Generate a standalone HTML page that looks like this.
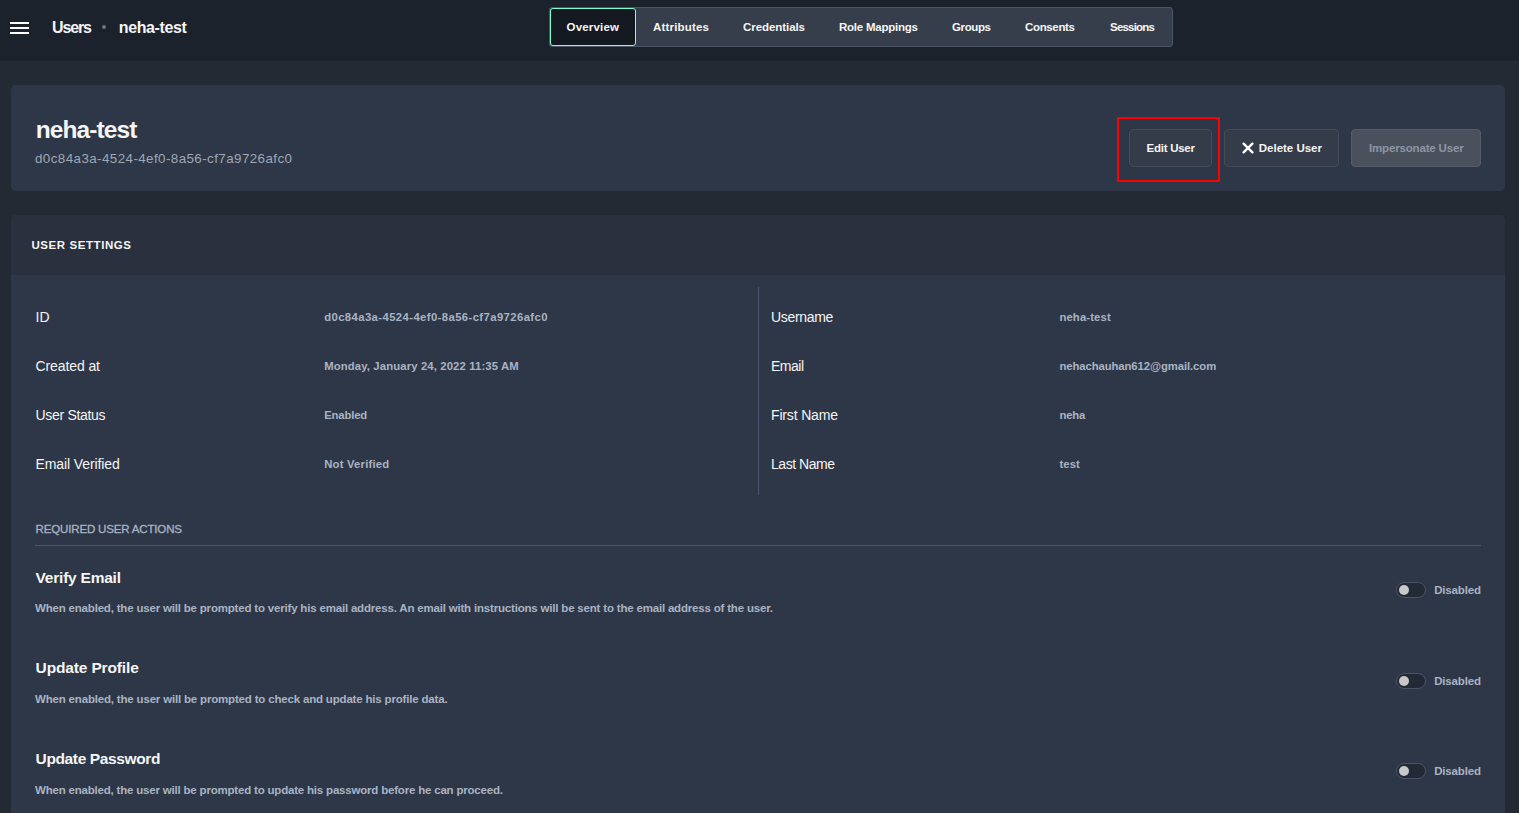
<!DOCTYPE html><html><head><meta charset="utf-8"><style>
html,body{margin:0;padding:0;width:1519px;height:813px;overflow:hidden;background:#242a34;}
body{position:relative;font-family:"Liberation Sans",sans-serif;}
.t{position:absolute;white-space:nowrap;}
.r{position:absolute;box-sizing:border-box;}
</style></head><body>
<div class="r" style="left:0px;top:0px;width:1519px;height:61px;background:#1c222b;"></div>
<div class="r" style="left:10px;top:22px;width:19px;height:2px;background:#fff;"></div>
<div class="r" style="left:10px;top:27px;width:19px;height:2px;background:#fff;"></div>
<div class="r" style="left:10px;top:32px;width:19px;height:2px;background:#fff;"></div>
<div class="t" id="t0" style="left:52px;top:17.66px;font-size:16px;line-height:20.0px;font-weight:700;color:#f5f5f5;letter-spacing:-1.121px;">Users</div>
<div class="r" style="left:102px;top:25px;width:4px;height:4px;background:#6b7385;border-radius:50%;"></div>
<div class="t" id="t1" style="left:118.8px;top:17.66px;font-size:16px;line-height:20.0px;font-weight:700;color:#f5f5f5;letter-spacing:-0.391px;">neha-test</div>
<div class="r" style="left:549px;top:7px;width:624px;height:40px;background:#363d4b;border:1px solid #4c5568;border-radius:3px;"></div>
<div class="r" style="left:550px;top:8px;width:86px;height:38px;background:#141820;border:1px solid #7fffd4;border-radius:3px;"></div>
<div class="t" id="t2" style="left:566.5px;top:20.03px;font-size:11.5px;line-height:14.38px;font-weight:700;color:#f5f5f5;letter-spacing:0.192px;">Overview</div>
<div class="t" id="t3" style="left:653px;top:20.03px;font-size:11.5px;line-height:14.38px;font-weight:700;color:#f5f5f5;letter-spacing:0.188px;">Attributes</div>
<div class="t" id="t4" style="left:743px;top:20.03px;font-size:11.5px;line-height:14.38px;font-weight:700;color:#f5f5f5;letter-spacing:-0.064px;">Credentials</div>
<div class="t" id="t5" style="left:839px;top:20.03px;font-size:11.5px;line-height:14.38px;font-weight:700;color:#f5f5f5;letter-spacing:-0.232px;">Role Mappings</div>
<div class="t" id="t6" style="left:952px;top:20.03px;font-size:11.5px;line-height:14.38px;font-weight:700;color:#f5f5f5;letter-spacing:-0.378px;">Groups</div>
<div class="t" id="t7" style="left:1025px;top:20.03px;font-size:11.5px;line-height:14.38px;font-weight:700;color:#f5f5f5;letter-spacing:-0.344px;">Consents</div>
<div class="t" id="t8" style="left:1110px;top:20.03px;font-size:11.5px;line-height:14.38px;font-weight:700;color:#f5f5f5;letter-spacing:-0.786px;">Sessions</div>
<div class="r" style="left:11px;top:85px;width:1494px;height:106px;background:#2e3747;border-radius:5px;"></div>
<div class="t" id="t9" style="left:35.7px;top:115.20px;font-size:24.5px;line-height:30.62px;font-weight:700;color:#f5f5f5;letter-spacing:-0.903px;">neha-test</div>
<div class="t" id="t10" style="left:35px;top:151.48px;font-size:13.4px;line-height:16.75px;font-weight:400;color:#9fa7b4;letter-spacing:0.408px;">d0c84a3a-4524-4ef0-8a56-cf7a9726afc0</div>
<div class="r" style="left:1117px;top:117px;width:103px;height:65px;border:2px solid #ff0000;"></div>
<div class="r" style="left:1129px;top:129px;width:83px;height:38px;background:#343b49;border:1px solid #434a58;border-radius:4px;"></div>
<div class="t" id="t11" style="left:1146.6px;top:140.83px;font-size:11.5px;line-height:14.38px;font-weight:700;color:#f5f5f5;letter-spacing:-0.263px;">Edit User</div>
<div class="r" style="left:1224px;top:129px;width:115px;height:38px;background:#343b49;border:1px solid #434a58;border-radius:4px;"></div>
<svg style="position:absolute;left:1242px;top:142px" width="12" height="12" viewBox="0 0 12 12"><path d="M1.6 1.6L10.4 10.4M10.4 1.6L1.6 10.4" stroke="#fff" stroke-width="2.3" stroke-linecap="round"/></svg>
<div class="t" id="t12" style="left:1258.8px;top:140.83px;font-size:11.5px;line-height:14.38px;font-weight:700;color:#f5f5f5;letter-spacing:-0.010px;">Delete User</div>
<div class="r" style="left:1351px;top:129px;width:130px;height:38px;background:#4a505c;border:1px solid #555b67;border-radius:4px;"></div>
<div class="t" id="t13" style="left:1369px;top:140.83px;font-size:11.5px;line-height:14.38px;font-weight:700;color:#8e96a3;letter-spacing:-0.164px;">Impersonate User</div>
<div class="r" style="left:11px;top:215px;width:1494px;height:700px;background:#2e3747;border-radius:5px;"></div>
<div class="r" style="left:11px;top:215px;width:1494px;height:60px;background:#2a303d;border-radius:5px 5px 0 0;"></div>
<div class="t" id="t14" style="left:31.5px;top:238.13px;font-size:11.5px;line-height:14.38px;font-weight:700;color:#f5f5f5;letter-spacing:0.570px;">USER SETTINGS</div>
<div class="t" id="t15" style="left:35.5px;top:308.90px;font-size:14px;line-height:17.5px;font-weight:400;color:#f5f5f5;">ID</div>
<div class="t" id="t16" style="left:324.2px;top:310.02px;font-size:11.3px;line-height:14.12px;font-weight:700;color:#a9b3c3;letter-spacing:0.404px;">d0c84a3a-4524-4ef0-8a56-cf7a9726afc0</div>
<div class="t" id="t17" style="left:771px;top:308.90px;font-size:14px;line-height:17.5px;font-weight:400;color:#f5f5f5;letter-spacing:-0.313px;">Username</div>
<div class="t" id="t18" style="left:1059.4px;top:310.02px;font-size:11.3px;line-height:14.12px;font-weight:700;color:#a9b3c3;letter-spacing:0.135px;">neha-test</div>
<div class="t" id="t19" style="left:35.5px;top:357.80px;font-size:14px;line-height:17.5px;font-weight:400;color:#f5f5f5;letter-spacing:-0.097px;">Created at</div>
<div class="t" id="t20" style="left:324.2px;top:359.02px;font-size:11.3px;line-height:14.12px;font-weight:700;color:#a9b3c3;letter-spacing:0.132px;">Monday, January 24, 2022 11:35 AM</div>
<div class="t" id="t21" style="left:771px;top:357.80px;font-size:14px;line-height:17.5px;font-weight:400;color:#f5f5f5;letter-spacing:-0.504px;">Email</div>
<div class="t" id="t22" style="left:1059.4px;top:359.02px;font-size:11.3px;line-height:14.12px;font-weight:700;color:#a9b3c3;letter-spacing:-0.077px;">nehachauhan612@gmail.com</div>
<div class="t" id="t23" style="left:35.5px;top:406.70px;font-size:14px;line-height:17.5px;font-weight:400;color:#f5f5f5;letter-spacing:-0.314px;">User Status</div>
<div class="t" id="t24" style="left:324.2px;top:408.02px;font-size:11.3px;line-height:14.12px;font-weight:700;color:#a9b3c3;letter-spacing:-0.159px;">Enabled</div>
<div class="t" id="t25" style="left:771px;top:406.70px;font-size:14px;line-height:17.5px;font-weight:400;color:#f5f5f5;letter-spacing:-0.161px;">First Name</div>
<div class="t" id="t26" style="left:1059.4px;top:408.02px;font-size:11.3px;line-height:14.12px;font-weight:700;color:#a9b3c3;letter-spacing:-0.125px;">neha</div>
<div class="t" id="t27" style="left:35.5px;top:455.60px;font-size:14px;line-height:17.5px;font-weight:400;color:#f5f5f5;letter-spacing:-0.107px;">Email Verified</div>
<div class="t" id="t28" style="left:324.2px;top:457.02px;font-size:11.3px;line-height:14.12px;font-weight:700;color:#a9b3c3;letter-spacing:0.202px;">Not Verified</div>
<div class="t" id="t29" style="left:771px;top:455.60px;font-size:14px;line-height:17.5px;font-weight:400;color:#f5f5f5;letter-spacing:-0.463px;">Last Name</div>
<div class="t" id="t30" style="left:1059.4px;top:457.02px;font-size:11.3px;line-height:14.12px;font-weight:700;color:#a9b3c3;letter-spacing:0.135px;">test</div>
<div class="r" style="left:758px;top:287px;width:1px;height:208px;background:#4a576f;"></div>
<div class="t" id="t31" style="left:35.6px;top:521.83px;font-size:11.5px;line-height:14.38px;font-weight:400;color:#a9b3c3;letter-spacing:-0.157px;-webkit-text-stroke:0.3px #a9b3c3;">REQUIRED USER ACTIONS</div>
<div class="r" style="left:35px;top:545px;width:1446px;height:1px;background:#4a576f;"></div>
<div class="t" id="t32" style="left:35.6px;top:567.64px;font-size:15.5px;line-height:19.38px;font-weight:700;color:#f5f5f5;letter-spacing:-0.226px;">Verify Email</div>
<div class="t" id="t33" style="left:35px;top:600.63px;font-size:11.5px;line-height:14.38px;font-weight:700;color:#a9b3c3;letter-spacing:-0.188px;">When enabled, the user will be prompted to verify his email address. An email with instructions will be sent to the email address of the user.</div>
<div class="r" style="left:1396px;top:582px;width:30px;height:16px;background:#242a35;border:1px solid #4a5266;border-radius:8px;"></div>
<div class="r" style="left:1399px;top:585px;width:10px;height:10px;background:#c8c8c8;border-radius:50%;"></div>
<div class="t" id="t34" style="left:1434.2px;top:582.83px;font-size:11.5px;line-height:14.38px;font-weight:700;color:#a9b3c3;letter-spacing:-0.163px;">Disabled</div>
<div class="t" id="t35" style="left:35.6px;top:657.64px;font-size:15.5px;line-height:19.38px;font-weight:700;color:#f5f5f5;letter-spacing:-0.144px;">Update Profile</div>
<div class="t" id="t36" style="left:35px;top:692.03px;font-size:11.5px;line-height:14.38px;font-weight:700;color:#a9b3c3;letter-spacing:-0.179px;">When enabled, the user will be prompted to check and update his profile data.</div>
<div class="r" style="left:1396px;top:673px;width:30px;height:16px;background:#242a35;border:1px solid #4a5266;border-radius:8px;"></div>
<div class="r" style="left:1399px;top:676px;width:10px;height:10px;background:#c8c8c8;border-radius:50%;"></div>
<div class="t" id="t37" style="left:1434.2px;top:673.83px;font-size:11.5px;line-height:14.38px;font-weight:700;color:#a9b3c3;letter-spacing:-0.163px;">Disabled</div>
<div class="t" id="t38" style="left:35.6px;top:748.64px;font-size:15.5px;line-height:19.38px;font-weight:700;color:#f5f5f5;letter-spacing:-0.376px;">Update Password</div>
<div class="t" id="t39" style="left:35px;top:783.13px;font-size:11.5px;line-height:14.38px;font-weight:700;color:#a9b3c3;letter-spacing:-0.195px;">When enabled, the user will be prompted to update his password before he can proceed.</div>
<div class="r" style="left:1396px;top:763px;width:30px;height:16px;background:#242a35;border:1px solid #4a5266;border-radius:8px;"></div>
<div class="r" style="left:1399px;top:766px;width:10px;height:10px;background:#c8c8c8;border-radius:50%;"></div>
<div class="t" id="t40" style="left:1434.2px;top:763.83px;font-size:11.5px;line-height:14.38px;font-weight:700;color:#a9b3c3;letter-spacing:-0.163px;">Disabled</div>
</body></html>
